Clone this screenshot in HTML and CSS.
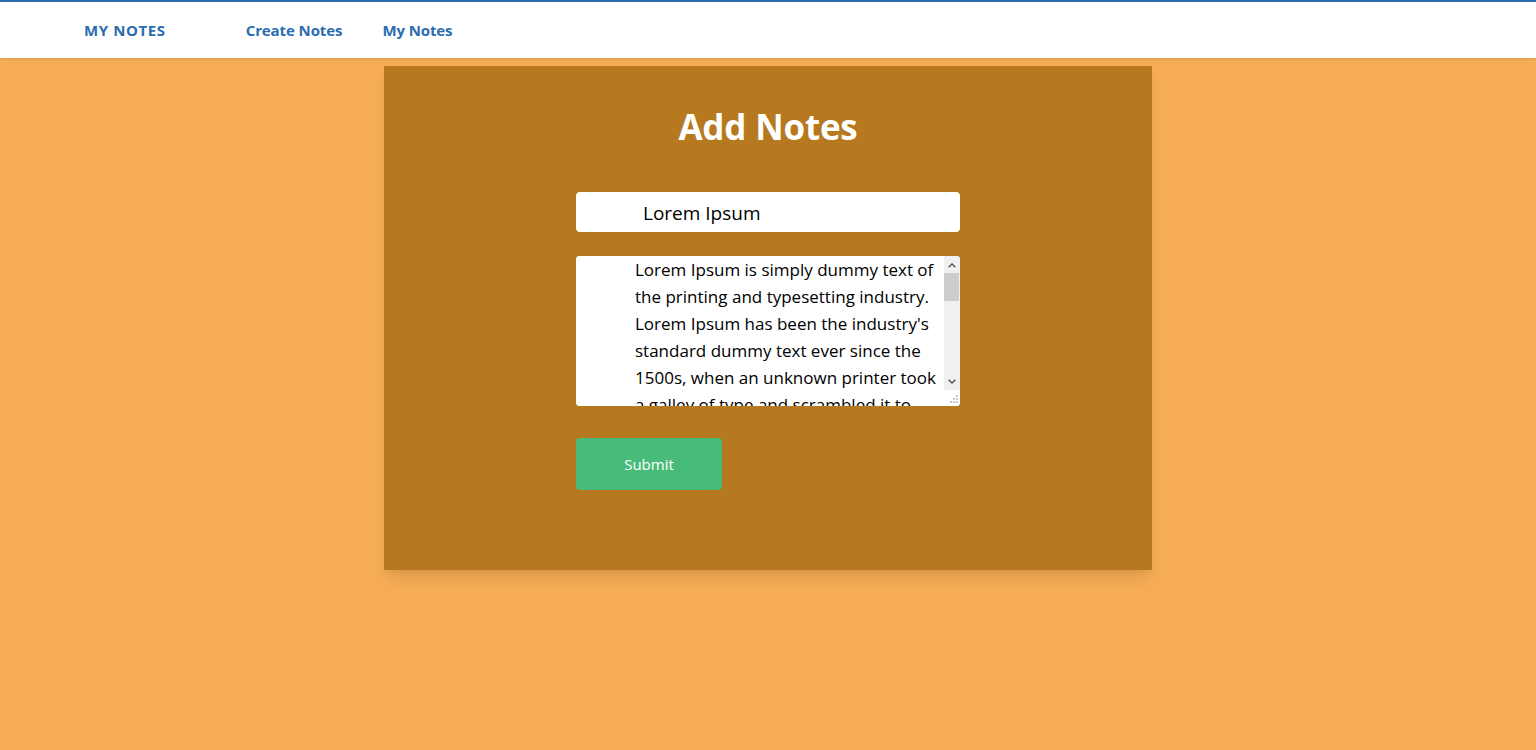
FILE: index.html
```html
<!DOCTYPE html>
<html>
<head>
<meta charset="utf-8">
<link rel="stylesheet" href="styles.css">
</head>
<body>
<nav class="nav">
  <a class="brand" href="#">MY NOTES</a>
  <a class="link" href="#">Create Notes</a>
  <a class="link" href="#">My Notes</a>
</nav>
<main class="main">
  <section class="card">
    <h1 class="title">Add Notes</h1>
    <form class="form">
      <input class="field" type="text" value="Lorem Ipsum">
      <div class="area-wrap">
        <textarea class="area">Lorem Ipsum is simply dummy text of the printing and typesetting industry. Lorem Ipsum has been the industry's standard dummy text ever since the 1500s, when an unknown printer took a galley of type and scrambled it to make a type specimen book. It has survived not only five centuries, but also the leap into electronic typesetting, remaining essentially unchanged.</textarea>
        <div class="scrollbar">
          <div class="sb-btn">
            <svg width="8" height="5" viewBox="0 0 8 5"><path d="M0.7 4.3 L4 1 L7.3 4.3" fill="none" stroke="#505050" stroke-width="1.4"/></svg>
          </div>
          <div class="sb-thumb"></div>
          <div class="sb-btn sb-down">
            <svg width="8" height="5" viewBox="0 0 8 5"><path d="M0.7 0.7 L4 4 L7.3 0.7" fill="none" stroke="#505050" stroke-width="1.4"/></svg>
          </div>
        </div>
        <div class="grip">
          <svg width="16" height="16" viewBox="0 0 16 16">
            <rect x="12" y="5" width="2" height="2" fill="#c8c8c8"/>
            <rect x="9" y="8" width="2" height="2" fill="#c8c8c8"/>
            <rect x="12" y="8" width="2" height="2" fill="#c8c8c8"/>
            <rect x="6" y="11" width="2" height="2" fill="#c8c8c8"/>
            <rect x="9" y="11" width="2" height="2" fill="#c8c8c8"/>
            <rect x="12" y="11" width="2" height="2" fill="#c8c8c8"/>
          </svg>
        </div>
      </div>
      <button class="submit" type="button">Submit</button>
    </form>
  </section>
</main>
</body>
</html>
```

FILE: styles.css
```css
* { box-sizing: border-box; }
html, body { margin: 0; padding: 0; }
body {
  background: #f6ad55;
  font-family: "Open Sans", "Noto Sans", sans-serif;
  height: 750px;
  overflow: hidden;
}
.nav {
  display: flex;
  align-items: center;
  height: 58px;
  background: #fff;
  border-top: 2px solid #2b6cb0;
  padding-left: 84px;
  box-shadow: 0 1px 3px rgba(0,0,0,0.12);
  position: relative;
  z-index: 1;
}
.nav a {
  color: #2b6cb0;
  text-decoration: none;
  font-weight: 700;
  font-size: 15px;
}
.brand { margin-right: 80px; letter-spacing: 0.6px; }
.link { margin-right: 40px; letter-spacing: -0.1px; }
.main {
  display: flex;
  justify-content: center;
  padding-top: 8px;
}
.card {
  width: 768px;
  height: 504px;
  background: #b7791f;
  box-shadow: 0 10px 15px -3px rgba(0,0,0,0.1), 0 4px 6px -2px rgba(0,0,0,0.05);
  padding-top: 37px;
}
.title {
  margin: 0;
  text-align: center;
  color: #fff;
  font-size: 35px;
  font-weight: 700;
  line-height: 48px;
  letter-spacing: -0.2px;
}
.form {
  width: 384px;
  margin: 41px auto 0;
  display: flex;
  flex-direction: column;
  align-items: flex-start;
}
.field {
  width: 384px;
  height: 40px;
  border: none;
  border-radius: 4px;
  background: #fff;
  padding: 2px 0 0 67px;
  font-family: inherit;
  font-size: 19px;
  color: #000;
  outline: none;
}
.area-wrap {
  position: relative;
  margin-top: 24px;
  width: 384px;
  height: 150px;
  border-radius: 4px;
  overflow: hidden;
  background: #fff;
}
.area {
  display: block;
  width: 384px;
  height: 150px;
  border: none;
  background: #fff;
  padding: 0 16px 0 59px;
  font-family: inherit;
  font-size: 17px;
  line-height: 27px;
  color: #000;
  outline: none;
  resize: none;
  overflow: hidden;
}
.scrollbar {
  position: absolute;
  top: 0;
  right: 0;
  width: 16px;
  height: 134px;
  background: #f0f0f0;
  display: flex;
  flex-direction: column;
}
.sb-btn {
  height: 17px;
  display: flex;
  align-items: center;
  justify-content: center;
  padding-top: 1px;
}
.sb-down { margin-top: auto; padding-top: 0; padding-bottom: 1px; }
.sb-thumb {
  height: 28px;
  background: #cdcdcd;
  margin-right: 1px;
}
.grip {
  position: absolute;
  right: 0;
  bottom: 0;
  width: 16px;
  height: 16px;
  background: #fff;
}
.grip svg { display: block; }
.submit {
  margin-top: 32px;
  width: 146px;
  height: 52px;
  border: none;
  border-radius: 4px;
  background: #48bb78;
  color: #fff;
  font-family: inherit;
  font-size: 15px;
  cursor: pointer;
}
```
